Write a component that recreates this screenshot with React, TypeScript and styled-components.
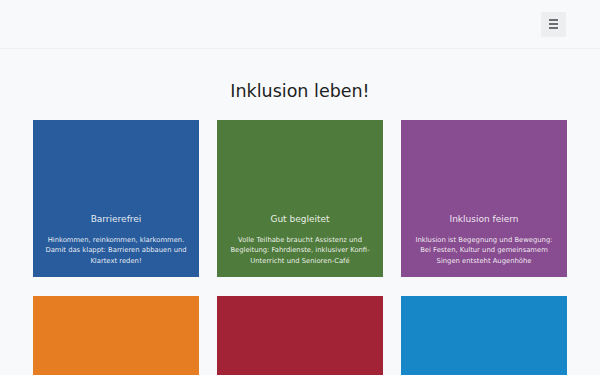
import React from "react";
import styled, { createGlobalStyle } from "styled-components";

const GlobalStyle = createGlobalStyle`
  * { box-sizing: border-box; }
  body {
    margin: 0;
    background: #f8f9fb;
    font-family: "DejaVu Sans", "Liberation Sans", sans-serif;
    color: #212529;
  }
`;

interface ICard {
  title?: string;
  text?: string;
  color: string;
}

const cards: ICard[] = [
  {
    title: "Barrierefrei",
    text: "Hinkommen, reinkommen, klarkommen. Damit das klappt: Barrieren abbauen und Klartext reden!",
    color: "#295c9d",
  },
  {
    title: "Gut begleitet",
    text: "Volle Teilhabe braucht Assistenz und Begleitung: Fahrdienste, inklusiver Konfi-Unterricht und Senioren-Café",
    color: "#4f7b3c",
  },
  {
    title: "Inklusion feiern",
    text: "Inklusion ist Begegnung und Bewegung: Bei Festen, Kultur und gemeinsamem Singen entsteht Augenhöhe",
    color: "#884c90",
  },
  { color: "#e67d22" },
  { color: "#a32336" },
  { color: "#1787c8" },
];

const Header = styled.header`
  height: 49px;
  border-bottom: 1px solid #eceef1;
  display: flex;
  align-items: center;
  justify-content: flex-end;
  padding: 0 34px 0 0;
  background: #f8f9fb;
`;

const MenuButton = styled.button`
  width: 25px;
  height: 25px;
  border: 0;
  background: #eceef0;
  border-radius: 2px;
  display: flex;
  flex-direction: column;
  align-items: center;
  justify-content: center;
  gap: 2.5px;
  padding: 0;
  cursor: pointer;
`;

const MenuLine = styled.span`
  display: block;
  width: 9px;
  height: 1.5px;
  background: #6b6e72;
`;

const Main = styled.main`
  padding: 30px 33px 0;
`;

const Title = styled.h1`
  margin: 0 0 17px;
  text-align: center;
  font-size: 17.5px;
  font-weight: 400;
  line-height: 24px;
  color: #1d1f22;
`;

const Grid = styled.div`
  display: grid;
  grid-template-columns: repeat(3, 166px);
  column-gap: 18px;
  row-gap: 19px;
`;

const Card = styled.div<{ $color: string }>`
  height: 157px;
  background: ${(p) => p.$color};
  display: flex;
  flex-direction: column;
  justify-content: flex-end;
  align-items: center;
  text-align: center;
  padding: 0 12px 11px;
  color: rgba(255, 255, 255, 0.9);
`;

const CardTitle = styled.h2`
  margin: 0 0 10px;
  font-size: 9px;
  font-weight: 400;
  line-height: 12px;
`;

const CardText = styled.p`
  margin: 0;
  font-size: 6.8px;
  line-height: 10.5px;
`;

export default function App() {
  return (
    <>
      <GlobalStyle />
      <Header>
        <MenuButton aria-label="Menü">
          <MenuLine />
          <MenuLine />
          <MenuLine />
        </MenuButton>
      </Header>
      <Main>
        <Title>Inklusion leben!</Title>
        <Grid>
          {cards.map((card, i) => (
            <Card key={i} $color={card.color}>
              {card.title && <CardTitle>{card.title}</CardTitle>}
              {card.text && <CardText>{card.text}</CardText>}
            </Card>
          ))}
        </Grid>
      </Main>
    </>
  );
}
